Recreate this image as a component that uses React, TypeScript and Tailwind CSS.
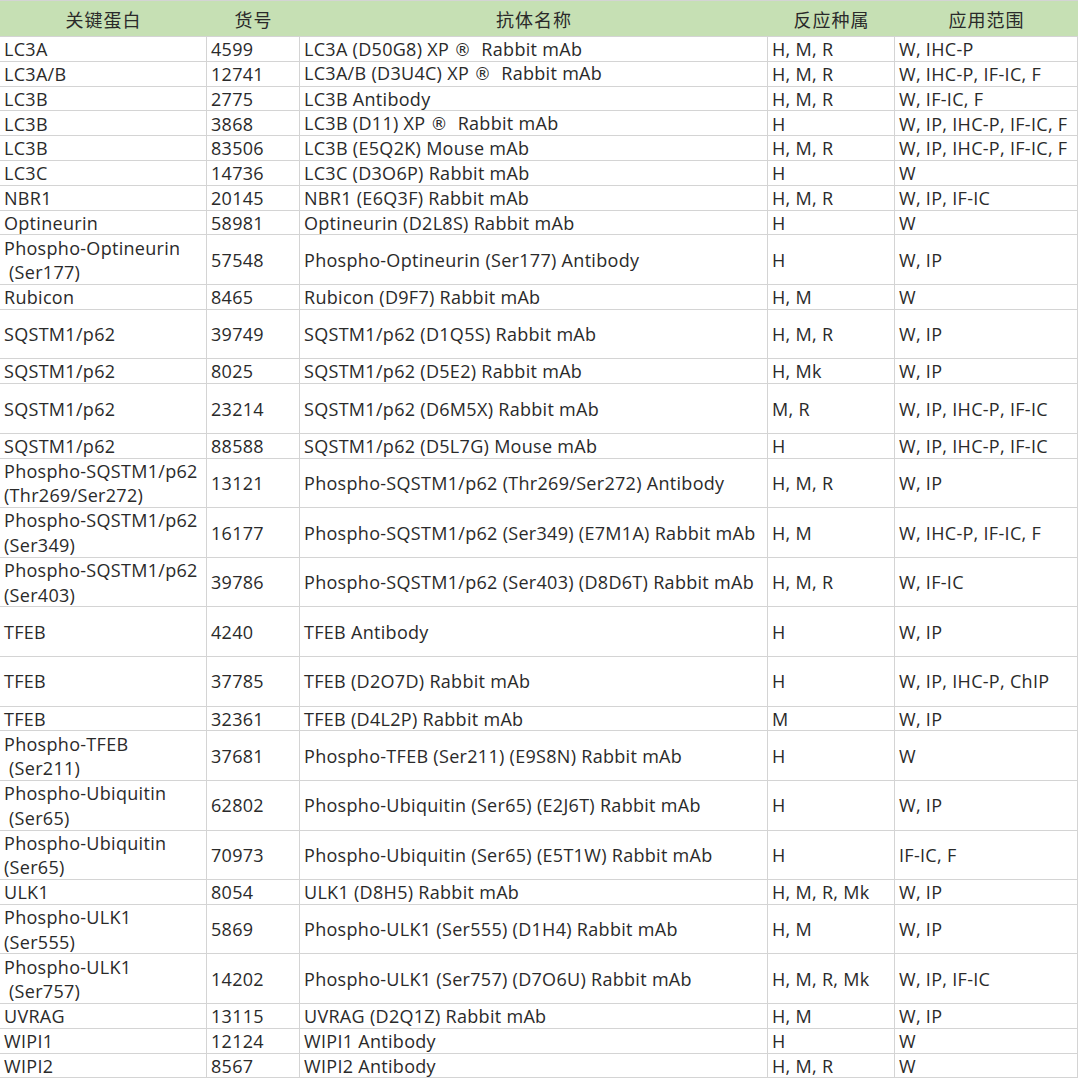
import React from "react";

type Row = [string, string, string, string, string, boolean];

const rows: Row[] = [
  ["LC3A", "4599", "LC3A (D50G8) XP ®  Rabbit mAb", "H, M, R", "W, IHC-P", false],
  ["LC3A/B", "12741", "LC3A/B (D3U4C) XP ®  Rabbit mAb", "H, M, R", "W, IHC-P, IF-IC, F", false],
  ["LC3B", "2775", "LC3B Antibody", "H, M, R", "W, IF-IC, F", false],
  ["LC3B", "3868", "LC3B (D11) XP ®  Rabbit mAb", "H", "W, IP, IHC-P, IF-IC, F", false],
  ["LC3B", "83506", "LC3B (E5Q2K) Mouse mAb", "H, M, R", "W, IP, IHC-P, IF-IC, F", false],
  ["LC3C", "14736", "LC3C (D3O6P) Rabbit mAb", "H", "W", false],
  ["NBR1", "20145", "NBR1 (E6Q3F) Rabbit mAb", "H, M, R", "W, IP, IF-IC", false],
  ["Optineurin", "58981", "Optineurin (D2L8S) Rabbit mAb", "H", "W", false],
  ["Phospho-Optineurin\n (Ser177)", "57548", "Phospho-Optineurin (Ser177) Antibody", "H", "W, IP", true],
  ["Rubicon", "8465", "Rubicon (D9F7) Rabbit mAb", "H, M", "W", false],
  ["SQSTM1/p62", "39749", "SQSTM1/p62 (D1Q5S) Rabbit mAb", "H, M, R", "W, IP", true],
  ["SQSTM1/p62", "8025", "SQSTM1/p62 (D5E2) Rabbit mAb", "H, Mk", "W, IP", false],
  ["SQSTM1/p62", "23214", "SQSTM1/p62 (D6M5X) Rabbit mAb", "M, R", "W, IP, IHC-P, IF-IC", true],
  ["SQSTM1/p62", "88588", "SQSTM1/p62 (D5L7G) Mouse mAb", "H", "W, IP, IHC-P, IF-IC", false],
  ["Phospho-SQSTM1/p62\n(Thr269/Ser272)", "13121", "Phospho-SQSTM1/p62 (Thr269/Ser272) Antibody", "H, M, R", "W, IP", true],
  ["Phospho-SQSTM1/p62\n(Ser349)", "16177", "Phospho-SQSTM1/p62 (Ser349) (E7M1A) Rabbit mAb", "H, M", "W, IHC-P, IF-IC, F", true],
  ["Phospho-SQSTM1/p62\n(Ser403)", "39786", "Phospho-SQSTM1/p62 (Ser403) (D8D6T) Rabbit mAb", "H, M, R", "W, IF-IC", true],
  ["TFEB", "4240", "TFEB Antibody", "H", "W, IP", true],
  ["TFEB", "37785", "TFEB (D2O7D) Rabbit mAb", "H", "W, IP, IHC-P, ChIP", true],
  ["TFEB", "32361", "TFEB (D4L2P) Rabbit mAb", "M", "W, IP", false],
  ["Phospho-TFEB\n (Ser211)", "37681", "Phospho-TFEB (Ser211) (E9S8N) Rabbit mAb", "H", "W", true],
  ["Phospho-Ubiquitin\n (Ser65)", "62802", "Phospho-Ubiquitin (Ser65) (E2J6T) Rabbit mAb", "H", "W, IP", true],
  ["Phospho-Ubiquitin\n(Ser65)", "70973", "Phospho-Ubiquitin (Ser65) (E5T1W) Rabbit mAb", "H", "IF-IC, F", true],
  ["ULK1", "8054", "ULK1 (D8H5) Rabbit mAb", "H, M, R, Mk", "W, IP", false],
  ["Phospho-ULK1\n(Ser555)", "5869", "Phospho-ULK1 (Ser555) (D1H4) Rabbit mAb", "H, M", "W, IP", true],
  ["Phospho-ULK1\n (Ser757)", "14202", "Phospho-ULK1 (Ser757) (D7O6U) Rabbit mAb", "H, M, R, Mk", "W, IP, IF-IC", true],
  ["UVRAG", "13115", "UVRAG (D2Q1Z) Rabbit mAb", "H, M", "W, IP", false],
  ["WIPI1", "12124", "WIPI1 Antibody", "H", "W", false],
  ["WIPI2", "8567", "WIPI2 Antibody", "H, M, R", "W", false],
];

const headers = ["关键蛋白", "货号", "抗体名称", "反应种属", "应用范围"];

function CellText({ text }: { text: string }) {
  if (!text.includes("®")) return <>{text}</>;
  const [a, b] = text.split("®");
  return (
    <>
      {a}
      <span className="font-['DejaVu_Sans',sans-serif] text-[17px]">®</span>
      {b}
    </>
  );
}

export default function App() {
  return (
    <div className="w-[1080px] h-[1079px] bg-white overflow-hidden font-['Open_Sans','Noto_Sans_CJK_SC',sans-serif] text-[18px] tracking-[0.3px] text-[#2a2a2a]">
      <div className="w-[1078px] border-t border-[#d4d4d4]">
        <div className="grid grid-cols-[207px_93px_468px_127px_183px] h-[36px] bg-[#c6e0b4] border-b border-[#d4d4d4] font-['Noto_Sans_CJK_SC',sans-serif] text-[18px] tracking-[1px]">
          {headers.map((h, i) => (
            <div key={i} className="flex items-center justify-center leading-[24px]">
              {h}
            </div>
          ))}
        </div>
        {rows.map((r, idx) => (
          <div
            key={idx}
            className={`grid grid-cols-[207px_93px_468px_127px_183px] border-b border-[#d4d4d4] ${
              r[5] ? "h-[49.6px]" : "h-[24.8px]"
            }`}
          >
            {r.slice(0, 5).map((c, i) => (
              <div
                key={i}
                className="flex items-center pl-[4px] pt-[1px] border-r border-[#d4d4d4] whitespace-pre leading-[24.6px] overflow-hidden"
              >
                <span>
                  <CellText text={c as string} />
                </span>
              </div>
            ))}
          </div>
        ))}
      </div>
    </div>
  );
}
